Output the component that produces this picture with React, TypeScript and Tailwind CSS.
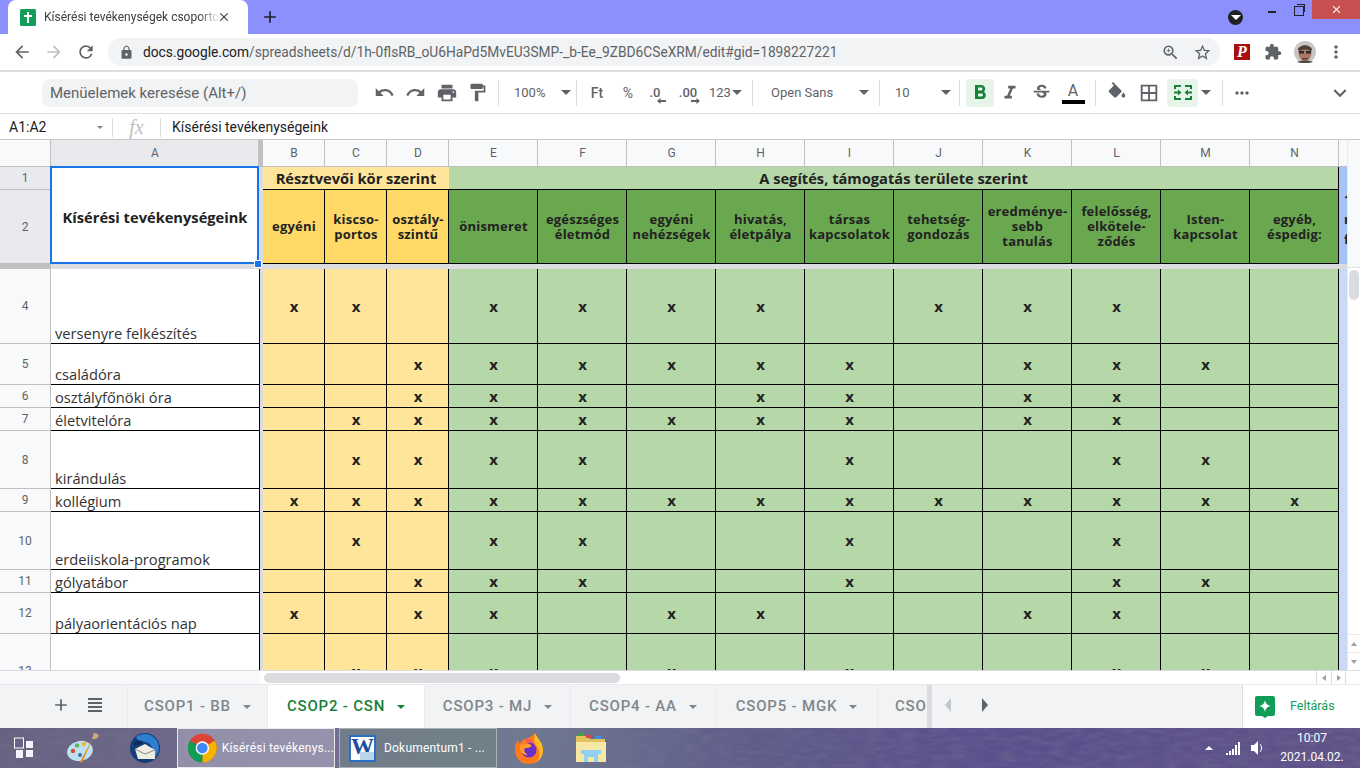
import {
  MdAdd, MdArrowBack, MdArrowForward, MdBorderAll, MdClose, MdExpandMore, MdExtension, MdFormatBold,
  MdFormatItalic, MdFormatPaint, MdLock, MdMoreHoriz, MdMoreVert, MdPrint, MdRedo, MdRefresh, MdStarBorder,
  MdStrikethroughS, MdUndo, MdZoomIn,
} from "react-icons/md";
import type { ReactNode } from "react";

const cols = ["B", "C", "D", "E", "F", "G", "H", "I", "J", "K", "L", "M", "N"];
const rows = [
  { n: 4, name: "versenyre felkészítés", x: "BCEFGHJKL" },
  { n: 5, name: "családóra", x: "DEFGHIKLM" },
  { n: 6, name: "osztályfőnöki óra", x: "DEFHIKL" },
  { n: 7, name: "életvitelóra", x: "CDEFGHIKL" },
  { n: 8, name: "kirándulás", x: "CDEFILM" },
  { n: 9, name: "kollégium", x: "BCDEFGHIJKLMN" },
  { n: 10, name: "erdeiiskola-programok", x: "CEFIL" },
  { n: 11, name: "gólyatábor", x: "DEFILM" },
  { n: 12, name: "pályaorientációs nap", x: "BDEGHKL" },
  { n: 13, name: "", x: "CDEGILM" },
];
const heads = [
  ["egyéni"], ["kiscso-", "portos"], ["osztály-", "szintű"], ["önismeret"], ["egészséges", "életmód"], ["egyéni", "nehézségek"],
  ["hivatás,", "életpálya"], ["társas", "kapcsolatok"], ["tehetség-", "gondozás"], ["eredménye-", "sebb", "tanulás"],
  ["felelősség,", "elkötele-", "ződés"], ["Isten-", "kapcsolat"], ["egyéb,", "éspedig:"],
];

function Caret({ c = "border-t-[#5f6368]" }: { c?: string }) {
  return <div className={"w-0 h-0 border-x-[5px] border-x-transparent border-t-[5px] " + c} />;
}

function Sep() {
  return <div className="w-px h-[26px] bg-[#dadce0]" />;
}

function Btn({ w, children, on }: { w: string; children: ReactNode; on?: boolean }) {
  return <div className={"h-7 flex items-center justify-center rounded-sm " + w + (on ? " bg-[#e6f4ea] text-[#188038]" : " text-[#5f6368]")}>{children}</div>;
}

function MergeIcon() {
  return (
    <svg width="18" height="15" viewBox="0 0 18 15" fill="#188038">
      <path d="M0 0h7v2H2v2H0zM11 0h7v4h-2V2h-5zM0 11h2v2h5v2H0zM16 11h2v4h-7v-2h5z" />
      <path d="M0 6.500h4V4.500l3.500 3-3.500 3v-2H0zM18 6.500h-4V4.500l-3.500 3 3.500 3v-2h4z" />
    </svg>
  );
}

function FillIcon() {
  return (
    <svg width="22" height="22" viewBox="0 0 24 24" fill="#5f6368">
      <path d="M16.560 8.940 7.620 0 6.210 1.410l2.380 2.380-5.150 5.150c-.59.59-.59 1.540 0 2.120l5.500 5.500c.29.29.68.44 1.060.44s.77-.15 1.060-.44l5.500-5.500c.59-.58.59-1.530 0-2.120z" />
      <path d="M19 11.500s-2 2.170-2 3.500c0 1.100.9 2 2 2s2-.9 2-2c0-1.330-2-3.500-2-3.500z" />
    </svg>
  );
}

function TitleBar() {
  return (
    <div className="h-[34px] bg-[#8c90ff] flex">
      <div className="ml-[8px] w-[240px] h-[34px] bg-white rounded-t-lg flex items-center pl-[12px]">
        <svg width="16" height="17" viewBox="0 0 16 17"><rect width="16" height="17" rx="1.500" fill="#0f9d58" /><path d="M7 3h2v3h3v2H9v6H7V8H4V6h3z" fill="#fff" /></svg>
        <span className="ml-[8px] w-[176px] overflow-hidden whitespace-nowrap text-[12px] text-[#3c4043] [mask-image:linear-gradient(90deg,#000_88%,transparent)]">Kísérési tevékenységek csoportosítása</span>
        <MdClose size={14} className="ml-[-3px] text-[#3c4043]" />
      </div>
      <MdAdd size={20} className="ml-[12px] mt-[7px] text-[#202124]" />
      <div className="flex-1" />
      <div className="w-[15px] h-[15px] mt-[10px] mr-[25px] rounded-full bg-[#202124] flex items-center justify-center"><Caret c="border-t-white" /></div>
      <div className="w-[8px] h-[2px] mt-[11px] mr-[18px] bg-[#202124]" />
      <div className="w-[10px] h-[10px] mt-[6px] mr-[8px] border border-[#202124] relative"><div className="absolute -top-[3px] left-[2px] w-[8px] h-[8px] border-t border-r border-[#202124]" /></div>
      <div className="w-[48px] h-[19px] bg-[#c75050] flex items-center justify-center text-white"><MdClose size={13} /></div>
    </div>
  );
}

function AddressBar() {
  return (
    <div className="h-[36px] bg-white flex items-center text-[#5f6368]">
      <MdArrowBack size={20} className="ml-[12px]" />
      <MdArrowForward size={20} className="ml-[12px] text-[#bdc1c6]" />
      <MdRefresh size={20} className="ml-[12px]" />
      <div className="ml-[12px] w-[1112px] h-[28px] rounded-full bg-[#f1f3f4] flex items-center pl-[11px] pr-[8px]">
        <MdLock size={15} />
        <span className="ml-[9px] text-[13.75px]"><span className="text-[#202124]">docs.google.com</span>/spreadsheets/d/1h-0flsRB_oU6HaPd5MvEU3SMP-_b-Ee_9ZBD6CSeXRM/edit#gid=1898227221</span>
        <div className="flex-1" />
        <MdZoomIn size={19} />
        <MdStarBorder size={19} className="ml-[13px]" />
      </div>
      <div className="ml-[14px] w-[16px] h-[16px] bg-[#a80e0e] text-white font-['Liberation_Serif',serif] italic font-bold text-[16px] leading-[16px] text-center">P</div>
      <MdExtension size={18} className="ml-[14px]" />
      <svg width="22" height="22" viewBox="0 0 22 22" className="ml-[12px]">
        <circle cx="11" cy="11" r="11" fill="#c9c6c2" />
        <ellipse cx="11" cy="12" rx="6.500" ry="8" fill="#a9786a" />
        <path d="M4 9c0-6 14-6 14 0l-1 1c-3-2-9-2-12 0z" fill="#4a403b" />
        <path d="M5 10h5v2.500H5zM12 10h5v2.500h-5z" fill="#2b2b2b" />
        <path d="M8 17h6v1.500H8z" fill="#6b3a34" />
        <path d="M3 21c3-2 13-2 16 0l-4 1H7z" fill="#4d4a4a" />
      </svg>
      <MdMoreVert size={20} className="ml-[10px]" />
    </div>
  );
}

function Toolbar() {
  return (
    <div className="h-[44px] border-t-2 border-[#dcdce0] border-b border-b-[#dadce0] bg-white flex items-center font-['Roboto',sans-serif] text-[#5f6368] text-[13px]">
      <div className="ml-[42px] w-[316px] h-[28px] rounded-lg bg-[#f1f3f4] pl-[8px] text-[15px] leading-[28px] text-[#5f6368]">Menüelemek keresése (Alt+/)</div>
      <div className="ml-[11px] flex">
        <Btn w="w-[31px]"><MdUndo size={21} /></Btn>
        <Btn w="w-[31px]"><MdRedo size={21} /></Btn>
        <Btn w="w-[31px]"><MdPrint size={22} /></Btn>
        <Btn w="w-[31px]"><MdFormatPaint size={21} /></Btn>
      </div>
      <div className="ml-[5px]"><Sep /></div>
      <div className="w-[77px] flex items-center pl-[15px]"><span>100%</span><span className="ml-[16px]"><Caret /></span></div>
      <Sep />
      <Btn w="w-[40px]"><span className="text-[14px] font-medium pt-[1px]">Ft</span></Btn>
      <Btn w="w-[22px]"><span className="text-[14px] pt-[1px]">%</span></Btn>
      <Btn w="w-[32px]">
        <span className="relative font-medium">.0
          <svg width="9" height="6" viewBox="0 0 9 6" className="absolute left-[8px] top-[15px]" fill="#5f6368"><path d="M0 3 3.500 0v2H9v2H3.500v2z" /></svg>
        </span>
      </Btn>
      <Btn w="w-[34px]">
        <span className="relative font-medium">.00
          <svg width="9" height="6" viewBox="0 0 9 6" className="absolute left-[12px] top-[15px]" fill="#5f6368"><path d="M9 3 5.500 0v2H0v2h5.500v2z" /></svg>
        </span>
      </Btn>
      <div className="w-[47px] flex items-center pl-[4px]"><span>123</span><span className="ml-[1px]"><Caret /></span></div>
      <Sep />
      <div className="w-[126px] flex items-center pl-[18px]"><span className="w-[88px]">Open Sans</span><Caret /></div>
      <Sep />
      <div className="w-[79px] flex items-center pl-[15px]"><span className="w-[46px]">10</span><Caret /></div>
      <Sep />
      <div className="ml-[6px]"><Btn w="w-[28px]" on><MdFormatBold size={24} /></Btn></div>
      <Btn w="w-[32px]"><MdFormatItalic size={22} /></Btn>
      <Btn w="w-[31px]"><MdStrikethroughS size={21} /></Btn>
      <Btn w="w-[32px]"><div className="flex flex-col items-center pt-[1px]"><span className="text-[16px] leading-[17px]">A</span><div className="w-[23px] h-[4px] mt-[1px] bg-black" /></div></Btn>
      <div className="ml-[6px]"><Sep /></div>
      <Btn w="w-[38px]"><div className="pl-[3px]"><FillIcon /></div></Btn>
      <Btn w="w-[30px]"><MdBorderAll size={22} /></Btn>
      <div className="ml-[3px]"><Btn w="w-[31px]" on><MergeIcon /></Btn></div>
      <div className="w-[16px] flex justify-center"><Caret /></div>
      <div className="ml-[8px]"><Sep /></div>
      <Btn w="w-[38px]"><MdMoreHoriz size={20} /></Btn>
      <div className="flex-1" />
      <MdExpandMore size={26} className="mr-[7px]" />
    </div>
  );
}

function FormulaBar() {
  return (
    <div className="h-[26px] bg-white border-b border-[#c7c7c7] pt-[1px] flex items-center font-['Roboto',sans-serif] text-[14px] text-[#202124]">
      <div className="w-[112px] pl-[9px] flex items-center"><span className="w-[88px]">A1:A2</span><div className="w-0 h-0 border-x-[3px] border-x-transparent border-t-[3px] border-t-[#80868b]" /></div>
      <div className="w-px h-[19px] bg-[#dadce0]" />
      <div className="w-[47px] text-center font-['Liberation_Serif',serif] italic text-[20px] text-[#bdc1c6]">fx</div>
      <div className="w-px h-[19px] bg-[#dadce0]" />
      <span className="ml-[11px]">Kísérési tevékenységeink</span>
    </div>
  );
}

function Grid() {
  const hdr = "bg-[#f8f9fa] border-r border-b border-[#c0c0c0] flex items-center justify-center font-['Roboto',sans-serif] text-[12px] text-[#5f6368]";
  const sel = "bg-[#e8eaed] border-r border-b border-[#c0c0c0] flex items-center justify-center font-['Roboto',sans-serif] text-[12px] text-[#5f6368]";
  const line = "border-r border-b border-black pl-[1px]";
  return (
    <div className="flex h-[530px] overflow-hidden">
      <div className="relative h-[530px] overflow-hidden grid grid-cols-[51px_208px_4px_62px_62px_62px_repeat(10,89px)_8px] grid-rows-[27px_23px_74px_5px_75px_41px_23px_23px_58px_23px_58px_23px_41px_75px] font-['Open_Sans',sans-serif] text-[#222] w-[1347px]">
        <div className={hdr} />
        <div className={sel + " pl-[1px]"}>A</div>
        <div className="bg-[#c0c0c0]" />
        {cols.map((c) => <div key={c} className={hdr + " pl-[1px]"}>{c}</div>)}
        <div className="bg-[#f8f9fa] border-b border-[#c0c0c0]" />

        <div className={sel}>1</div>
        <div className="row-span-2 bg-white flex items-center justify-center font-bold text-[14.67px] pt-[2px]">Kísérési tevékenységeink</div>
        <div className="row-span-2 bg-[#dadce0]" />
        <div className="col-span-3 bg-[#ffe599] border-b border-black flex items-center justify-center font-bold text-[14.67px]">Résztvevői kör szerint</div>
        <div className="col-span-10 bg-[#b6d7a8] border-b border-r border-black flex items-center justify-center font-bold text-[14.67px]">A segítés, támogatás területe szerint</div>
        <div className="row-span-2 bg-[#a4c2f4] overflow-hidden font-bold text-[13px] leading-[20px] pt-[22px] pl-[5px]">1<br />n<br />f</div>

        <div className={sel}>2</div>
        {heads.map((h, i) => (
          <div key={i} className={line + " flex flex-col items-center justify-center font-bold text-[13px] leading-[15px] tracking-[0.2px] " + (i < 3 ? "bg-[#ffd966]" : "bg-[#6aa84f]")}>
            {h.map((t) => <span key={t}>{t}</span>)}
          </div>
        ))}

        <div className="bg-[#c0c0c0]" />
        <div className="col-span-16 bg-[#dadce0]" />

        {rows.map((r) => (
          <div key={r.n} className="contents">
            <div className={hdr}>{r.n}</div>
            <div className="bg-white border-b border-black flex items-end pl-[4px] text-[14.67px] leading-[19px] text-[#333]">{r.name}</div>
            <div className="bg-[#dadce0] border-l border-black" />
            {cols.map((c, i) => (
              <div key={c} className={line + " flex items-center justify-center font-bold text-[15px] " + (i < 3 ? "bg-[#ffe599]" : "bg-[#b6d7a8]")}>
                {r.x.includes(c) ? "x" : ""}
              </div>
            ))}
            <div className="bg-[#c9daf8]" />
          </div>
        ))}

        <div className="absolute left-[50px] top-[26px] w-[209px] h-[98px] border-2 border-[#1a73e8]" />
        <div className="absolute left-[254px] top-[120px] w-[8px] h-[8px] bg-[#1a73e8] border border-white" />
      </div>

      <div className="w-[13px] h-[530px] bg-white border-l border-[#e8eaed] flex flex-col">
        <div className="h-[128px] bg-[#f8f9fa] border-b border-[#e0e0e0]" />
        <div className="h-[30px] mx-[1px] mt-[2px] rounded-full bg-[#dadce0]" />
        <div className="flex-1" />
        <div className="h-[18px] border-t border-[#e8eaed] flex items-center justify-center"><div className="w-0 h-0 border-x-[3px] border-x-transparent border-b-[4px] border-b-[#9aa0a6]" /></div>
        <div className="h-[18px] border-t border-[#e8eaed] flex items-center justify-center"><div className="w-0 h-0 border-x-[3px] border-x-transparent border-t-[4px] border-t-[#9aa0a6]" /></div>
      </div>
    </div>
  );
}

function HScroll() {
  return (
    <div className="h-[14px] bg-white border-t border-[#dadce0] flex items-center">
      <div className="w-[260px] h-full bg-[#f8f9fa]" />
      <div className="ml-[4px] w-[356px] h-[10px] rounded-full bg-[#dadce0]" />
      <div className="flex-1" />
      <div className="w-[15px] h-full border-l border-[#dadce0] flex items-center justify-center"><div className="w-0 h-0 border-y-[3px] border-y-transparent border-r-[4px] border-r-[#9aa0a6]" /></div>
      <div className="w-[15px] h-full border-x border-[#dadce0] flex items-center justify-center"><div className="w-0 h-0 border-y-[3px] border-y-transparent border-l-[4px] border-l-[#9aa0a6]" /></div>
      <div className="w-[14px]" />
    </div>
  );
}

function Tab({ w, label, on }: { w: string; label: string; on?: boolean }) {
  return (
    <div className={"h-full flex items-center justify-center gap-[12px] border-r border-[#e8eaed] text-[15px] font-medium tracking-[0.8px] " + w + (on ? " bg-white text-[#188038]" : " text-[#80868b]")}>
      <span>{label}</span>
      <div className={"w-0 h-0 border-x-[4px] border-x-transparent border-t-[4px] " + (on ? "border-t-[#188038]" : "border-t-[#80868b]")} />
    </div>
  );
}

function SheetTabs() {
  return (
    <div className="h-[44px] bg-[#f1f3f4] border-t border-[#e8eaed] flex items-center font-['Roboto',sans-serif]">
      <MdAdd size={20} className="ml-[51px] mb-[4px] text-[#5f6368]" />
      <svg width="14" height="14" viewBox="0 0 14 14" fill="#5f6368" className="ml-[17px] mb-[4px]"><path d="M0 0h14v2H0zM0 4h14v2H0zM0 8h14v2H0zM0 12h14v2H0z" /></svg>
      <div className="ml-[25px] h-full flex w-[805px] border-l border-[#e8eaed]">
        <Tab w="w-[140px]" label="CSOP1 - BB" />
        <Tab w="w-[157px]" on label="CSOP2 - CSN" />
        <Tab w="w-[146px]" label="CSOP3 - MJ" />
        <Tab w="w-[145px]" label="CSOP4 - AA" />
        <Tab w="w-[162px]" label="CSOP5 - MGK" />
        <div className="w-[54px] h-full pl-[17px] overflow-hidden flex items-center text-[15px] font-medium tracking-[0.8px] text-[#80868b] border-r-[5px] border-[#dadce0]">CSO</div>
      </div>
      <div className="ml-[13px] mb-[4px] w-0 h-0 border-y-[7px] border-y-transparent border-r-[6px] border-r-[#c4c7ca]" />
      <div className="ml-[31px] mb-[4px] w-0 h-0 border-y-[7px] border-y-transparent border-l-[6px] border-l-[#5f6368]" />
      <div className="flex-1" />
      <div className="w-[118px] h-full bg-white border-l border-[#dadce0] flex items-center pl-[12px] text-[12.5px] text-[#0f9d58]">
        <svg width="20" height="22" viewBox="0 0 20 22">
          <path d="M2 0h16a2 2 0 0 1 2 2v16a2 2 0 0 1-2 2h-5l-3 2-3-2H2a2 2 0 0 1-2-2V2a2 2 0 0 1 2-2z" fill="#0f9d58" />
          <path d="M10 4c.6 3.400 2.200 5.200 6 6-3.800.8-5.400 2.600-6 6-.6-3.400-2.200-5.200-6-6 3.800-.8 5.400-2.600 6-6z" fill="#fff" />
        </svg>
        <span className="ml-[15px]">Feltárás</span>
      </div>
    </div>
  );
}

function Taskbar() {
  const box = "h-[40px] w-[158px] border flex items-center text-white text-[12px] font-['Roboto',sans-serif] tracking-[0.2px]";
  return (
    <div className="relative h-[40px] overflow-hidden bg-[linear-gradient(90deg,#65617f_0%,#726d92_24%,#6f7a90_38%,#5f5d8a_54%,#5a4f8c_72%,#5e5288_100%)]">
      <svg width="1360" height="40" className="absolute inset-0 opacity-40">
        <filter id="wall"><feTurbulence type="fractalNoise" baseFrequency="0.06 0.22" numOctaves="3" seed="4" /><feColorMatrix values="0 0 0 0 0.2  0 0 0 0 0.18  0 0 0 0 0.3  0 0 0 1.6 -0.5" /></filter>
        <rect width="1360" height="40" filter="url(#wall)" />
      </svg>
      <div className="relative h-[40px] flex items-center">
        <svg width="20" height="24" viewBox="0 0 20 24" className="ml-[14px]">
          <rect x="0.500" y="2" width="9" height="10" fill="none" stroke="#fff" />
          <rect x="12" y="5" width="7" height="7" fill="#f4f2fa" /><rect x="2" y="14" width="7" height="8" fill="#f4f2fa" /><rect x="12" y="14" width="7" height="7" fill="#f4f2fa" />
        </svg>
        <svg width="32" height="32" viewBox="0 0 32 32" className="ml-[33px]">
          <ellipse cx="13" cy="19" rx="13" ry="10" transform="rotate(-12 13 19)" fill="#bfe0ef" />
          <circle cx="6" cy="19" r="2.200" fill="#d94a3a" /><circle cx="10" cy="13.500" r="2.200" fill="#5cb85c" /><circle cx="17" cy="12" r="2.200" fill="#e7b92e" /><circle cx="13" cy="23" r="2" fill="#3f6fb5" />
          <path d="M26 6 15 31l-2-1z" fill="#e08a1e" />
          <path d="M25 7l2-6c2 0 4 1 5 3-1 2-3 3-5 3z" fill="#cfa878" />
        </svg>
        <svg width="30" height="32" viewBox="0 0 30 32" className="ml-[31px]">
          <circle cx="15" cy="16" r="15" fill="#123f7c" />
          <path d="M6 5c6-5 18-4 22 6 2 6 0 12-4 15 0-8-2-14-8-16-4-1-8 0-10-5z" fill="#2f7fd0" />
          <path d="M4 10c3-2 7-2 9 0l-2 2-7 2z" fill="#0c2c5c" />
          <path d="M5 17l10-5 10 6v9H8z" fill="#efece2" />
          <path d="M5 17l10 5 10-4" fill="none" stroke="#8a8a8a" />
        </svg>
        <div className={"ml-[17px] bg-white/25 border-white/80 " + box}>
          <svg width="30" height="30" viewBox="0 0 30 30" className="ml-[10px]">
            <circle cx="15" cy="15" r="15" fill="#db4437" />
            <path d="M15 15 28 7.500A15 15 0 0 1 15 30z" fill="#f4b400" />
            <path d="M15 15 15 30A15 15 0 0 1 2 7.500z" fill="#0f9d58" />
            <circle cx="15" cy="15" r="7" fill="#fff" /><circle cx="15" cy="15" r="5.500" fill="#4285f4" />
          </svg>
          <span className="ml-[5px] whitespace-nowrap">Kísérési tevékenys...</span>
        </div>
        <div className={"ml-[4px] bg-[#6f8a80]/50 border-white/40 " + box}>
          <div className="ml-[9px] w-[27px] h-[27px] bg-white border-[2px] border-[#2a6fc4] relative overflow-hidden">
            <div className="font-['Liberation_Serif',serif] font-bold text-[23px] leading-[20px] tracking-[-1px] text-[#1c4f9c]">W</div>
            <div className="absolute right-0 bottom-0 w-[14px] h-[8px] bg-[#bcd3ec]" />
          </div>
          <span className="ml-[8px] whitespace-nowrap">Dokumentum1 - ...</span>
        </div>
        <svg width="30" height="32" viewBox="0 0 30 32" className="ml-[17px]">
          <path d="M21 1c1 4 8 9 8 17 0 8-6 14-14 14S1 26 1 17c0-3 1-6 3-9 0 2 1 3 2 4 1-3 3-5 6-5 3-2 7-3 9-6z" fill="#ff7a1a" />
          <path d="M21 1c1 4 8 9 8 17 0 6-3 10-7 12 3-3 4-7 3-11-1-5-5-7-5-12z" fill="#ffbc2a" />
          <circle cx="15" cy="18" r="7.500" fill="#6a2fc8" />
          <path d="M6 14c3-3 8-4 11-1 2 2-3 3-5 3-3 0-2 5 2 7-4 1-9-4-8-9z" fill="#ff9a2a" />
          <path d="M12 7c3 0 7 1 9 5-3-2-6-3-9-2z" fill="#ff4f6a" />
        </svg>
        <svg width="32" height="30" viewBox="0 0 32 30" className="ml-[31px]">
          <path d="M1 3h11l3 3h15v22H1z" fill="#e2c25c" />
          <path d="M1 9h30v20H1z" fill="#f7e7a4" />
          <rect x="3" y="0" width="6" height="3" fill="#43a047" /><rect x="11" y="2" width="6" height="3" fill="#d9483b" /><rect x="20" y="3" width="6" height="3" fill="#3f8fe0" />
          <path d="M6 17h20v4h-3v8h-4v-5h-6v5H9v-8H6z" fill="#8fd2f0" />
        </svg>
        <div className="flex-1" />
        <div className="w-0 h-0 border-x-[4px] border-x-transparent border-b-[4px] border-b-white" />
        <svg width="14" height="14" viewBox="0 0 14 14" className="ml-[13px]" fill="#fff"><path d="M0 12h2v2H0zM3 10h2v4H3zM6 8h2v6H6zM9 4h2v10H9zM12 1h2v13h-2z" /></svg>
        <svg width="14" height="16" viewBox="0 0 14 16" className="ml-[11px]" fill="#fff"><path d="M0 5h3l4-4v14l-4-4H0z" /><path d="M9 4c2 2 2 6 0 8" fill="none" stroke="#fff" /></svg>
        <div className="ml-[19px] mr-[20px] w-[56px] flex flex-col items-center whitespace-nowrap font-['Roboto',sans-serif] text-white text-[12px] leading-[19px]">
          <span>10:07</span>
          <span>2021.04.02.</span>
        </div>
      </div>
    </div>
  );
}

export default function App() {
  return (
    <div className="w-[1360px] h-[768px] overflow-hidden bg-white flex flex-col font-['Roboto',sans-serif]">
      <TitleBar />
      <AddressBar />
      <Toolbar />
      <FormulaBar />
      <Grid />
      <HScroll />
      <SheetTabs />
      <Taskbar />
    </div>
  );
}
